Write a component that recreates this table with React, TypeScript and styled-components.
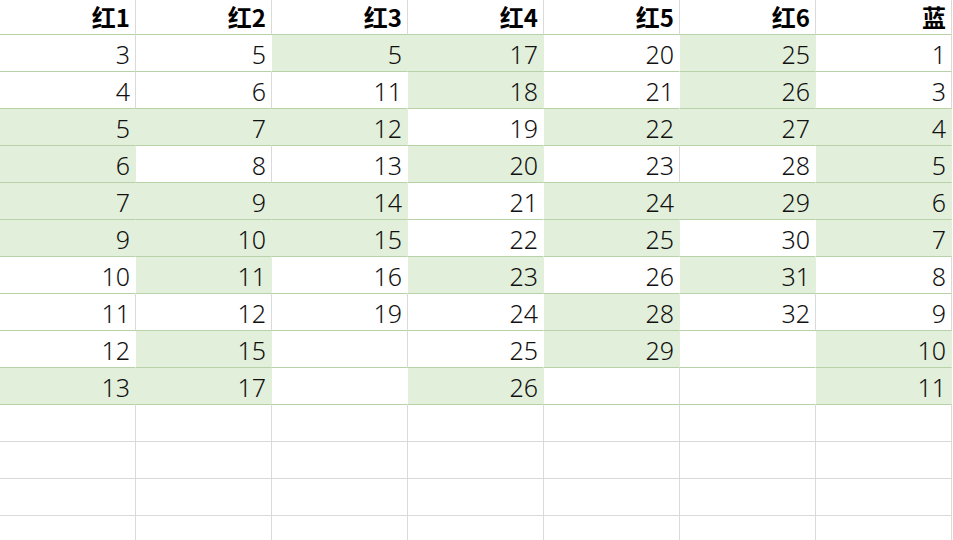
import styled, { createGlobalStyle } from "styled-components";

const GlobalStyle = createGlobalStyle`
    html, body {
        margin: 0;
        padding: 0;
        background: #ffffff;
        overflow: hidden;
    }
`

type Cell = [string, boolean];

const headers = ['红1', '红2', '红3', '红4', '红5', '红6', '蓝'];

// each row: value and whether it is highlighted
const rows: Cell[][] = [
    [['3', false], ['5', false], ['5', true], ['17', true], ['20', false], ['25', true], ['1', false]],
    [['4', false], ['6', false], ['11', false], ['18', true], ['21', false], ['26', true], ['3', false]],
    [['5', true], ['7', true], ['12', true], ['19', false], ['22', true], ['27', true], ['4', true]],
    [['6', true], ['8', false], ['13', false], ['20', true], ['23', false], ['28', false], ['5', true]],
    [['7', true], ['9', true], ['14', true], ['21', false], ['24', true], ['29', true], ['6', true]],
    [['9', true], ['10', true], ['15', true], ['22', false], ['25', true], ['30', false], ['7', true]],
    [['10', false], ['11', true], ['16', false], ['23', true], ['26', false], ['31', true], ['8', false]],
    [['11', false], ['12', false], ['19', false], ['24', false], ['28', true], ['32', false], ['9', false]],
    [['12', false], ['15', true], ['', false], ['25', false], ['29', true], ['', false], ['10', true]],
    [['13', true], ['17', true], ['', false], ['26', true], ['', false], ['', false], ['11', true]],
];

const emptyRows = 4;

const Sheet = styled.div`
    display: grid;
    grid-template-columns: repeat(7, 136px);
    grid-template-rows: 35px;
    grid-auto-rows: 37px;
    width: 953px;
    height: 540px;
    overflow: hidden;
    font-family: "Noto Sans", "Noto Sans CJK SC", sans-serif;
    color: #111111;
`

const HeadCell = styled.div`
    box-sizing: border-box;
    border-right: 1px solid #dadada;
    border-bottom: 1px solid #b7d1a8;
    padding: 0 5px 0 0;
    text-align: right;
    font-family: "Noto Sans CJK SC", sans-serif;
    font-weight: 700;
    font-size: 24px;
    line-height: 34px;
    color: #000000;
`

const DataCell = styled.div<{ $fill: boolean; $sep: boolean; $line: string }>`
    box-sizing: border-box;
    background: ${p => p.$fill ? '#e2efda' : '#ffffff'};
    border-right: 1px solid ${p => p.$sep ? '#dadada' : (p.$fill ? '#e2efda' : '#ffffff')};
    border-bottom: 1px solid ${p => p.$line};
    padding: 3px 5px 0 0;
    text-align: right;
    font-size: 25px;
    font-weight: 300;
    line-height: 33px;
`

const App: React.FC = () => {
    const blank: Cell[] = headers.map(() => ['', false]);
    const allRows = rows.concat(Array.from({ length: emptyRows }, () => blank));

    return (
        <>
            <GlobalStyle />
            <Sheet>
                {headers.map(h => <HeadCell key={h}>{h}</HeadCell>)}
                {allRows.map((row, r) =>
                    row.map(([value, fill], c) => {
                        const next = row[c + 1];
                        const sep = !fill && (!next || !next[1]);
                        const line = r < rows.length ? '#b7d1a8' : '#d9d9d9';
                        return (
                            <DataCell key={`${r}-${c}`} $fill={fill} $sep={sep} $line={line}>
                                {value}
                            </DataCell>
                        )
                    })
                )}
            </Sheet>
        </>
    )
}

export default App;
